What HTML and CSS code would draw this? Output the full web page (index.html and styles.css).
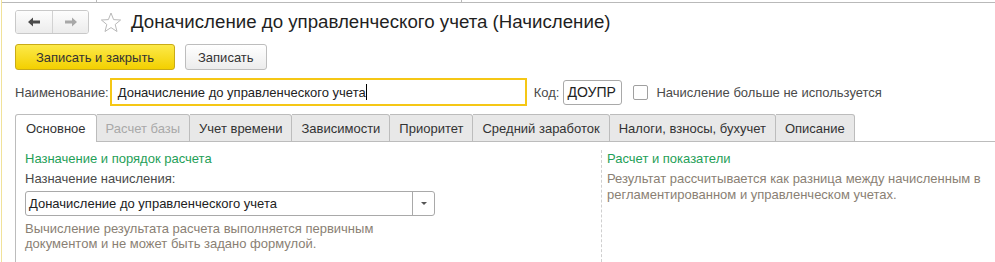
FILE: index.html
```html
<!DOCTYPE html>
<html lang="ru">
<head>
  <meta charset="UTF-8">
  <title>Доначисление до управленческого учета (Начисление)</title>
  <link rel="stylesheet" href="styles.css">
</head>
<body>
  <div class="page">
    <div class="top-strip">
      <span class="strip-gap"></span>
      <span class="strip-tab"></span>
    </div>

    <div class="header">
      <div class="nav">
        <button class="nav-btn">
          <svg width="14" height="10" viewBox="0 0 14 10"><path d="M1 5 L6 0.5 L6 3.5 L13 3.5 L13 6.5 L6 6.5 L6 9.5 Z" fill="#4a4a4a"/></svg>
        </button>
        <button class="nav-btn">
          <svg width="14" height="10" viewBox="0 0 14 10"><path d="M13 5 L8 0.5 L8 3.5 L1 3.5 L1 6.5 L8 6.5 L8 9.5 Z" fill="#a8a8a8"/></svg>
        </button>
      </div>
      <svg class="star" width="22" height="21" viewBox="0 0 22 21">
        <path d="M11 1 L13.6 7.6 L20.6 8 L15.2 12.5 L17 19.5 L11 15.6 L5 19.5 L6.8 12.5 L1.4 8 L8.4 7.6 Z" fill="none" stroke="#b9b9b9" stroke-width="1"/>
      </svg>
      <h1 class="title">Доначисление до управленческого учета (Начисление)</h1>
    </div>

    <div class="toolbar">
      <button class="btn btn-main">Записать и закрыть</button>
      <button class="btn">Записать</button>
    </div>

    <div class="field-row">
      <span class="label">Наименование:</span>
      <div class="input input-name">Доначисление до управленческого учета<span class="caret"></span></div>
      <span class="label label-code">Код:</span>
      <div class="input input-code">ДОУПР</div>
      <span class="checkbox"></span>
      <span class="label">Начисление больше не используется</span>
    </div>

    <div class="tabs">
      <div class="tab active">Основное</div>
      <div class="tab disabled">Расчет базы</div>
      <div class="tab">Учет времени</div>
      <div class="tab">Зависимости</div>
      <div class="tab">Приоритет</div>
      <div class="tab">Средний заработок</div>
      <div class="tab">Налоги, взносы, бухучет</div>
      <div class="tab">Описание</div>
      <div class="tab-fill"></div>
    </div>

    <div class="tab-body">
      <div class="col-left">
        <div class="group-title">Назначение и порядок расчета</div>
        <div class="field-label">Назначение начисления:</div>
        <div class="select">
          <span class="select-text">Доначисление до управленческого учета</span>
          <span class="select-btn"><span class="arrow"></span></span>
        </div>
        <div class="hint">Вычисление результата расчета выполняется первичным<br>документом и не может быть задано формулой.</div>
      </div>
      <div class="col-right">
        <div class="group-title">Расчет и показатели</div>
        <div class="hint">Результат рассчитывается как разница между начисленным в<br>регламентированном и управленческом учетах.</div>
      </div>
    </div>
  </div>
</body>
</html>
```

FILE: styles.css
```css
body {
  margin: 0;
  background: #fff;
  font-family: "Liberation Sans", Arial, sans-serif;
  font-size: 13px;
  color: #4a4a4a;
}

.page {
  margin-left: 1px;
  border-left: 1px solid #f1e29a;
  height: 262px;
  box-sizing: border-box;
  padding-left: 13px;
  overflow: hidden;
}

.top-strip {
  display: flex;
  height: 2px;
  margin-left: -14px;
  border-bottom: 1px solid #b9b9b9;
}

.strip-gap {
  width: 95px;
  border-right: 1px solid #b9b9b9;
}

.strip-tab {
  width: 364px;
  border-right: 1px solid #b9b9b9;
}

/* шапка */
.header {
  display: flex;
  align-items: center;
  height: 24px;
  margin-top: 7px;
}

.nav {
  display: flex;
  border: 1px solid #c9c9c9;
  border-radius: 3px;
  overflow: hidden;
}

.nav-btn {
  width: 36px;
  height: 22px;
  padding: 0;
  border: none;
  background: linear-gradient(#fdfdfd, #ececec);
  display: flex;
  align-items: center;
  justify-content: center;
}

.nav-btn + .nav-btn {
  border-left: 1px solid #d2d2d2;
}

.star {
  margin-left: 11px;
}

.title {
  margin: 0 0 0 9px;
  font-size: 18.7px;
  font-weight: normal;
  color: #1f1f1f;
}

/* кнопки */
.toolbar {
  display: flex;
  gap: 10px;
  margin-top: 10px;
}

.btn {
  height: 26px;
  padding: 0 12px;
  font-family: inherit;
  font-size: 13px;
  color: #333;
  border: 1px solid #bdbdbd;
  border-radius: 3px;
  background: linear-gradient(#ffffff, #ececec);
}

.btn-main {
  width: 160px;
  border-color: #c9ab17;
  background: linear-gradient(#fce94a, #f3d000);
  color: #333;
}

/* реквизиты */
.field-row {
  display: flex;
  align-items: center;
  height: 28px;
  margin-top: 8px;
}

.input {
  box-sizing: border-box;
  display: flex;
  align-items: center;
  color: #222;
}

.input-name {
  width: 417px;
  height: 28px;
  margin-left: 1px;
  padding-left: 6px;
  border: 2px solid #f5c715;
}

.caret {
  width: 1px;
  height: 16px;
  background: #000;
}

.label-code {
  margin-left: 7px;
}

.input-code {
  width: 59px;
  height: 25px;
  margin-left: 4px;
  padding-left: 3px;
  font-size: 14px;
  border: 1px solid #a9a9a9;
  border-radius: 3px;
}

.checkbox {
  width: 13px;
  height: 13px;
  margin: 0 8px 0 11px;
  border: 1px solid #a0a0a0;
  border-radius: 2px;
  background: #fff;
}

/* закладки */
.tabs {
  display: flex;
  margin-top: 8px;
  height: 28px;
}

.tab {
  box-sizing: border-box;
  height: 28px;
  padding: 0 9px;
  display: flex;
  align-items: center;
  color: #333;
  background: #e8e8e8;
  border: 1px solid #bcbcbc;
  border-left: none;
  border-radius: 0 3px 0 0;
}

.tab.active {
  background: #fff;
  border-left: 1px solid #bcbcbc;
  border-bottom: none;
  border-radius: 3px 3px 0 0;
  padding: 0 10px;
}

.tab.disabled {
  color: #a9a9a9;
}

.tab-fill {
  flex: 1;
  border-bottom: 1px solid #bcbcbc;
}

.tab-body {
  display: flex;
  height: 130px;
  border-left: 1px solid #bcbcbc;
  padding-left: 9px;
}

.col-left {
  width: 410px;
  padding-top: 9px;
}

.col-right {
  margin: 8px 0 0 166px;
  padding: 1px 0 0 5px;
  border-left: 1px dashed #cfcfcf;
}

.group-title {
  color: #1fa058;
  line-height: 16px;
}

.field-label {
  margin-top: 4px;
  line-height: 16px;
}

.select {
  display: flex;
  height: 25px;
  margin-top: 4px;
  box-sizing: border-box;
  border: 1px solid #a9a9a9;
  border-radius: 3px;
}

.select-text {
  flex: 1;
  display: flex;
  align-items: center;
  padding-left: 3px;
  color: #222;
}

.select-btn {
  width: 21px;
  border-left: 1px solid #a9a9a9;
  display: flex;
  align-items: center;
  justify-content: center;
}

.arrow {
  width: 0;
  height: 0;
  border-left: 3px solid transparent;
  border-right: 3px solid transparent;
  border-top: 3px solid #555;
}

.hint {
  margin-top: 5px;
  line-height: 15px;
  color: #8a7f74;
}

.col-right .hint {
  margin-top: 4px;
  line-height: 16px;
}
```
